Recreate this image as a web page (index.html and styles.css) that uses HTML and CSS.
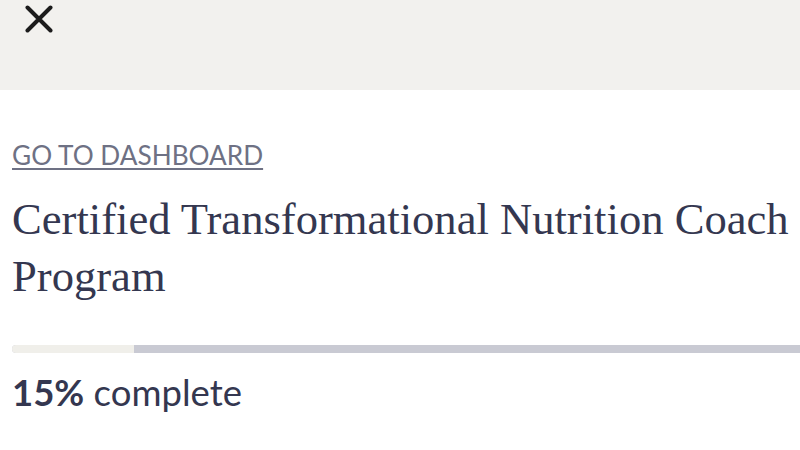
FILE: index.html
```html
<!DOCTYPE html>
<html>
<head>
<meta charset="utf-8">
<link rel="stylesheet" href="styles.css">
</head>
<body>
<header class="topbar">
  <button class="close" aria-label="Close">
    <svg width="28" height="28" viewBox="0 0 28 28"><path d="M2.5 2.5 L25.5 25.5 M25.5 2.5 L2.5 25.5" stroke="#1c1c1c" stroke-width="4" stroke-linecap="round" fill="none"/></svg>
  </button>
</header>
<main class="content">
  <a class="back" href="#">GO TO DASHBOARD</a>
  <h1 class="title">Certified Transformational Nutrition Coach Program</h1>
  <div class="progress"><div class="progress-fill" style="width:15.2%"></div></div>
  <p class="status"><strong>15%</strong> complete</p>
</main>
</body>
</html>
```
FILE: styles.css
```css
html, body { margin: 0; padding: 0; background: #fff; overflow: hidden; }
body { width: 800px; height: 450px; font-family: Lato, "Noto Sans", sans-serif; color: #343750; }
.topbar { height: 90px; background: #f2f1ee; padding: 5px 0 0 25px; box-sizing: border-box; }
.close { background: none; border: 0; padding: 0; margin: 0; width: 28px; height: 28px; display: block; }
.close svg { display: block; }
.content { padding: 0 0 0 12px; }
.back { display: inline-block; margin-top: 50px; font-size: 26.2px; line-height: 30px; color: #6e7184; text-decoration: underline; text-decoration-thickness: 2px; text-underline-offset: 3px; }
.title { margin: 21px 0 0; font-family: "Liberation Serif", "Times New Roman", serif; font-weight: 400; font-size: 44.6px; line-height: 57px; color: #343750; }
.progress { margin-top: 40px; height: 8px; background: #c9cad3; border-radius: 4px 0 0 4px; width: 800px; overflow: hidden; }
.progress-fill { height: 100%; background: #f0efea; }
.status { margin: 17px 0 0; font-size: 36.5px; line-height: 44px; color: #343750; }
.status strong { font-weight: 700; }
```
